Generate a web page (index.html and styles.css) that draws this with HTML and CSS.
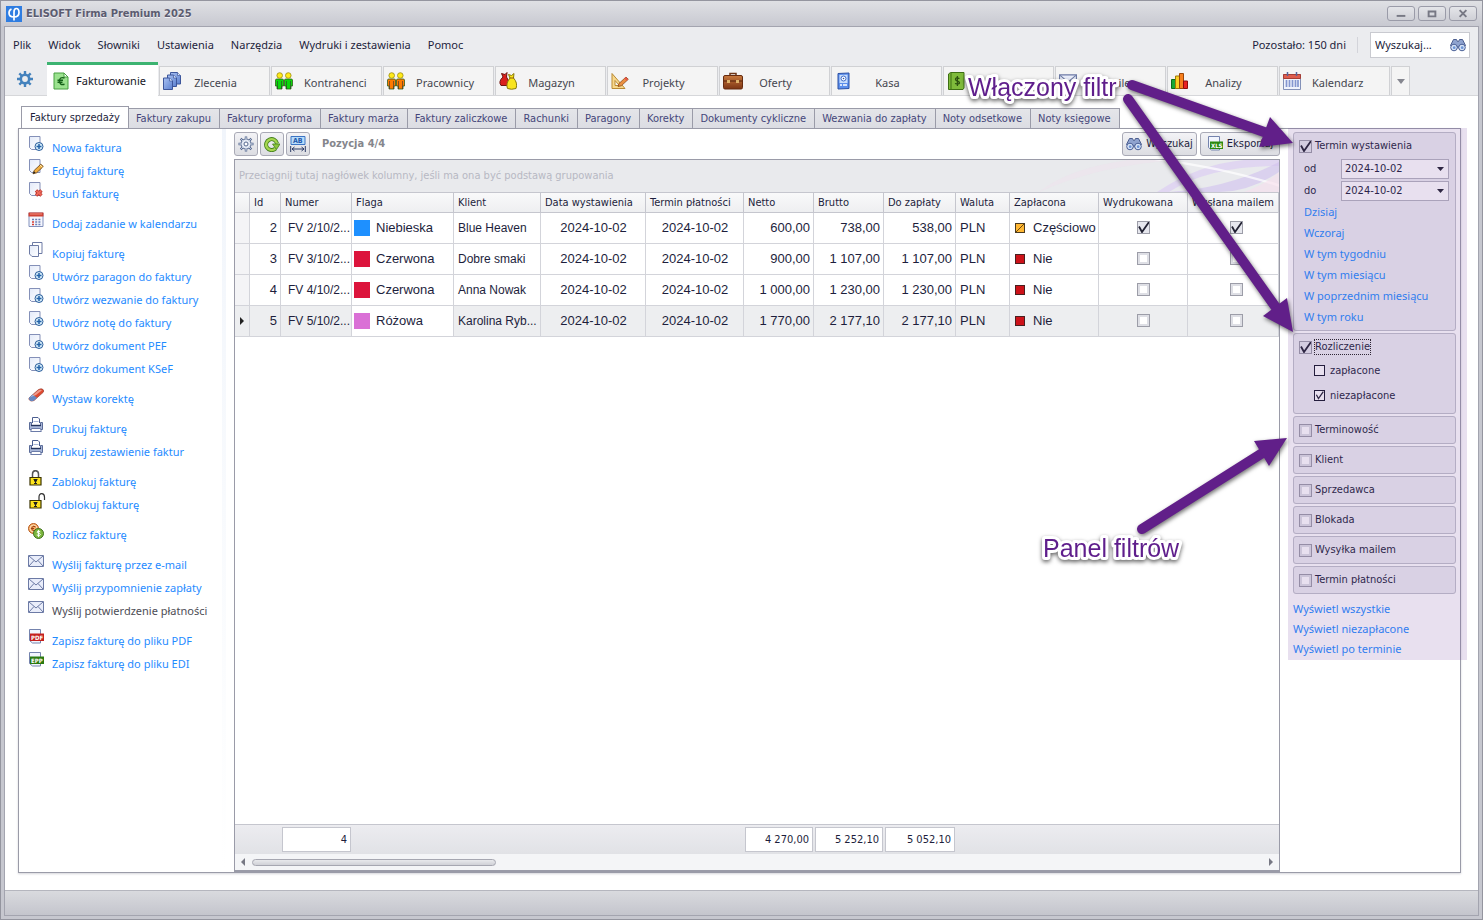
FILE: index.html
```html
<!DOCTYPE html>
<html lang="pl">
<head>
<meta charset="utf-8">
<title>ELISOFT Firma Premium 2025</title>
<link rel="stylesheet" href="styles.css">
</head>
<body>
<svg class="sprite" aria-hidden="true">
  <defs>
    <linearGradient id="gPage" x1="0" y1="0" x2="1" y2="1"><stop offset="0" stop-color="#e3eaf9"/><stop offset="1" stop-color="#fff"/></linearGradient>
    <linearGradient id="gBlue" x1="0" y1="0" x2="1" y2="1"><stop offset="0" stop-color="#a9c1f2"/><stop offset="1" stop-color="#5b80cf"/></linearGradient>
    <linearGradient id="gBrown" x1="0" y1="0" x2="0" y2="1"><stop offset="0" stop-color="#c97a3e"/><stop offset="1" stop-color="#7c3413"/></linearGradient>
    <symbol id="page" viewBox="0 0 16 16"><path d="M1.500.500h10.500v13h-8.500l-2-2z" fill="url(#gPage)" stroke="#8490b8"/></symbol>
    <symbol id="page-add" viewBox="0 0 16 16"><use href="#page"/><circle cx="11" cy="10.500" r="4" fill="#d6edfb" stroke="#2d5f9b"/><path d="M11 8v5M8.500 10.500h5" stroke="#2463a8" stroke-width="1.500"/></symbol>
    <symbol id="page-edit" viewBox="0 0 16 16"><use href="#page"/><path d="M5 14.800l1.200-3.400 6.600-6.200 2.500 2.300-6.700 6.300z" fill="#f2ae3f" stroke="#6f4a1b" stroke-width=".9"/><path d="M5 14.800l1-2.600 1.600 1.500z" fill="#222"/><path d="M12 6l2.500 2.400" stroke="#fff0b9"/></symbol>
    <symbol id="page-del" viewBox="0 0 16 16"><use href="#page"/><path d="M8 8.500l5.500 5M13.500 8.500l-5.500 5" stroke="#b42a22" stroke-width="3.400"/><path d="M8.300 8.800l5 4.400M13.200 8.800l-5 4.400" stroke="#ee6a5c" stroke-width="1.800"/></symbol>
    <symbol id="cal" viewBox="0 0 16 16"><path d="M1 1h14v13.500H1z" fill="#f4f6fd" stroke="#8291bd"/><path d="M.500.500h15v4H.500z" fill="#cf4335"/><path d="M2 2h12" stroke="#f08e80"/><path d="M4 7.500h2M7.200 7.500h2M10.400 7.500h2M7.200 10h2M10.400 10h2M7.200 12.500h2M10.400 12.500h2" stroke="#6c7fb5" stroke-width="1.400"/><path d="M4 10h2M4 12.500h2" stroke="#d63c31" stroke-width="1.600"/></symbol>
    <symbol id="copy" viewBox="0 0 16 16"><path d="M4.500.500h9.500v11H4.500z" fill="#fff" stroke="#6d7ba5"/><path d="M1.500 3.500h9v11H4l-2.500-2.500z" fill="url(#gPage)" stroke="#6d7ba5"/></symbol>
    <symbol id="eraser" viewBox="0 0 16 16"><path d="M1 11L10.500 2.500q3-1.500 4.500 0t0 3L6 13.500q-2.500 1.200-4 0t-1-2.500z" fill="#e0492f" stroke="#9a4436" stroke-width=".7"/><path d="M1 10.800L4.500 7.600l4.500 3.200-3 2.700q-2.500 1.200-4 0t-1-2.700z" fill="#6689c3"/><path d="M1.700 10.600L11 3q2-.8 3 .3l-6 4.700z" fill="#fff" opacity=".45"/></symbol>
    <symbol id="printer" viewBox="0 0 16 16"><path d="M4.500 6V.500h5.500l1.500 1.500v4" fill="#fff" stroke="#4c5f90"/><path d="M1.500 5.500h2v3h9v-3h2v7h-13z" fill="#a9b7d8" stroke="#5b6c99"/><path d="M3 8.500h10" stroke="#25345d" stroke-width="1.400"/><path d="M3.500 11.500h9l.800 3H2.700z" fill="#fff" stroke="#6b7ba8"/><path d="M5.500 4.500h5" stroke="#a9b7d8"/></symbol>
    <symbol id="lock" viewBox="0 0 16 16"><path d="M4.500 7V4q0-3.300 3-3.300t3 3.300v3" fill="none" stroke="#555" stroke-width="1.500"/><path d="M2 7.500h11v7.500H2z" fill="#ffe51d" stroke="#3a3200" stroke-width="1.200"/><path d="M5.500 9.500h4M7.500 9v4.500M6 13.500h3M6.500 9.500v2M8.500 9.500v2" stroke="#222"/></symbol>
    <symbol id="unlock" viewBox="0 0 18 16"><path d="M11 7V4q0-3.300 2.700-3.300T16.500 4v3" fill="none" stroke="#333" stroke-width="1.200"/><path d="M2 7.500h11v7.500H2z" fill="#ffe51d" stroke="#3a3200" stroke-width="1.200"/><path d="M5.500 9.500h4M7.500 9v4.500M6 13.500h3M6.500 9.500v2M8.500 9.500v2" stroke="#222"/></symbol>
    <symbol id="coins" viewBox="0 0 16 16"><circle cx="5.500" cy="5.500" r="5" fill="#f4a55d" stroke="#b55b1f"/><circle cx="5.500" cy="5.500" r="3.500" fill="none" stroke="#fde0b8"/><path d="M7.500 3.800q-3.500-1.500-3.500 1.700t3.500 1.800M3 5.500h3" fill="none" stroke="#984214"/><circle cx="10.500" cy="10.500" r="5" fill="#7cb63d" stroke="#3f6f1c"/><path d="M12.300 8.800q-3.300-1.300-3.300.2c0 1.700 3.400 1 3.400 2.600q0 1.500-3.700.4M10.600 7v7" fill="none" stroke="#fff"/></symbol>
    <symbol id="mail" viewBox="0 0 16 16"><path d="M.500 2.500h15v11H.500z" fill="#e9edfa" stroke="#6c7aa5"/><path d="M1 3l7 6 7-6M1 13l5-5.500M15 13l-5-5.500" fill="none" stroke="#6c7aa5"/></symbol>
    <symbol id="doc-tag" viewBox="0 0 16 16"><path d="M1.500.500h11v13.500h-8l-3-2.500z" fill="#f2f5fd" stroke="#7483ad"/></symbol>
    <symbol id="binoc" viewBox="0 0 16 14"><path d="M3.500 1.500h3l1 2h1l1-2h3l3 6-3 3H9L8 8 7 10.500H3.500l-3-3z" fill="#8fa3cf" stroke="#4b5d8e"/><circle cx="4" cy="9.500" r="3.300" fill="#d7e4f8" stroke="#4a5f96"/><circle cx="12" cy="9.500" r="3.300" fill="#d7e4f8" stroke="#4a5f96"/><circle cx="4.200" cy="9.700" r="1.400" fill="#6f96d6"/><circle cx="12.200" cy="9.700" r="1.400" fill="#6f96d6"/></symbol>
    <symbol id="people" viewBox="0 0 18 18"><path d="M.500 8q0-1 1.500-1h5q1.500 0 1.500 1v6H7v3H2v-3H.500zM9.500 8q0-1 1.500-1h5q1.500 0 1.500 1v6H16v3h-5v-3H9.500z" fill="currentColor" stroke="#2a5a12" stroke-opacity=".75"/><path d="M2.500 9v8M6.500 9v8M11.500 9v8M15.500 9v8" stroke="#333" stroke-width=".6"/><circle cx="4.700" cy="3.500" r="2.800" fill="#ffea1a" stroke="#9b8b10" stroke-width=".8"/><circle cx="13.300" cy="3.500" r="2.800" fill="#ffea1a" stroke="#9b8b10" stroke-width=".8"/></symbol>
  </defs>
</svg>

<div class="window">
  <header class="titlebar">
    <svg class="logo" viewBox="0 0 16 16"><path fill="#2f7de1" d="M0 0h16v16H0z"/><path d="M5.500 3q-2.500 1-2.500 4 0 4 5 4t5-4.500Q13 2.500 10.300 2.500 8 2.500 8 6v8.500" fill="none" stroke="#fff" stroke-width="1.700"/></svg>
    <h1 class="title">ELISOFT Firma Premium 2025</h1>
    <div class="winbtns">
      <button class="winbtn" aria-label="Minimalizuj"><svg viewBox="0 0 27 13"><path d="M9 9h9" stroke="#777884" stroke-width="2"/></svg></button>
      <button class="winbtn" aria-label="Maksymalizuj"><svg viewBox="0 0 27 13"><path d="M10 4.500h7v5h-7z" fill="none" stroke="#777884" stroke-width="2"/></svg></button>
      <button class="winbtn" aria-label="Zamknij"><svg viewBox="0 0 27 13"><path d="M10 3l7 7M17 3l-7 7" stroke="#777884" stroke-width="2"/></svg></button>
    </div>
  </header>

  <div class="client">
    <div class="menubar">
      <nav class="menu">
        <a href="#">Plik</a><a href="#">Widok</a><a href="#">Słowniki</a><a href="#">Ustawienia</a><a href="#">Narzędzia</a><a href="#">Wydruki i zestawienia</a><a href="#">Pomoc</a>
      </nav>
      <span class="remaining">Pozostało: 150 dni</span>
      <label class="search"><input type="text" value="Wyszukaj..." aria-label="Wyszukaj"><svg viewBox="0 0 16 14"><use href="#binoc"/></svg></label>
    </div>

    <nav class="ribbon">
      <button class="gear" aria-label="Konfiguracja"><svg viewBox="0 0 16 16"><circle cx="8" cy="8" r="4.200" fill="none" stroke="#4482bd" stroke-width="2.600"/><path d="M8 0v3M8 13v3M0 8h3M13 8h3M2.300 2.300l2.200 2.200M11.500 11.500l2.200 2.200M13.700 2.300l-2.200 2.200M4.500 11.500l-2.200 2.200" stroke="#4482bd" stroke-width="2.400"/></svg></button>
      <button class="mod active"><svg viewBox="0 0 18 18"><path d="M2 1h10l4 4v12H2z" fill="#9be28f" stroke="#46a040"/><path d="M12 1l4 4h-4z" fill="#fff" stroke="#46a040"/><path d="M12.500 6q-5-1.500-5 3t5 3.300M5.500 8.200h5.500M5.500 10.200h5" fill="none" stroke="#146018" stroke-width="1.400"/></svg><span>Fakturowanie</span></button>
      <button class="mod"><svg viewBox="0 0 18 18"><g fill="url(#gBlue)" stroke="#3d569b"><path d="M7.500.500h7l3 3V12h-10z"/><path d="M4.500 3h6l3 3v8.500h-9z"/><path d="M.500 6h6l3 3v8.500h-9z"/></g><path d="M6.500 6v3h3M10.500 3v3h3M14.500.500v3h3" fill="#dde7fb" stroke="#3d569b" stroke-width=".7"/></svg><span>Zlecenia</span></button>
      <button class="mod green"><svg viewBox="0 0 18 18"><use href="#people"/></svg><span>Kontrahenci</span></button>
      <button class="mod orange"><svg viewBox="0 0 18 18"><use href="#people"/></svg><span>Pracownicy</span></button>
      <button class="mod"><svg viewBox="0 0 18 18"><path d="M4 5L2.500 1.500 6 2.500 8 .500 7.500 5q3.500 4 1.500 8.500H2Q-1 9.500 4 5z" fill="#d9201c" stroke="#6f1511"/><path d="M11 6L9.500 2.500l3 1 2.500-2-.500 4.500q4.500 5 2.500 10.500-4.500 1.500-8.500 0Q6.500 11.500 11 6z" fill="#f8e41d" stroke="#8a7b0a"/><path d="M10.500 6h4.500" stroke="#8a5b0a"/></svg><span>Magazyn</span></button>
      <button class="mod"><svg viewBox="0 0 18 18"><path d="M1 1.500L14 16.500H1z" fill="#f8d88b" stroke="#b98a34"/><path d="M4 8.500l4.500 5H4z" fill="#f4f4f2" stroke="#b98a34"/><path d="M7 14.500L8 11.500l7-6.500 2.300 2.300-7 6.500z" fill="#eb9040" stroke="#8b4b1a" stroke-width=".8"/><path d="M14 5.800l2.300 2.300" stroke="#e8544a" stroke-width="2"/></svg><span>Projekty</span></button>
      <button class="mod wide"><svg viewBox="0 0 20 18"><path d="M7 4V1.500h6V4" fill="none" stroke="#6d3517" stroke-width="1.500"/><rect x=".500" y="3.500" width="19" height="13.500" rx="1.500" fill="url(#gBrown)" stroke="#662c10"/><path d="M1 9h18" stroke="#4f1f0a"/><path d="M4 8h3v3H4zM13 8h3v3h-3z" fill="#dfb36a"/></svg><span>Oferty</span></button>
      <button class="mod"><svg viewBox="0 0 18 18"><path d="M3 1.500L14 1v15.500L3 17z" fill="#5b8eec" stroke="#2d51a4"/><path d="M4.500 3l8-.3v8.300h-8z" fill="#c9defc"/><circle cx="8.500" cy="6.500" r="2.500" fill="#fff" stroke="#3d6bc9"/><circle cx="8.500" cy="6.500" r=".8" fill="#2d51a4"/><path d="M5 13h2M8 13h4" stroke="#fff" stroke-width="1.500"/></svg><span>Kasa</span></button>
      <button class="mod" aria-label="Księga"><svg viewBox="0 0 18 18"><path d="M1.500 2l2-1.500H17V16l-1 1.500H1.500z" fill="#7fbb3b" stroke="#3e6f14"/><path d="M4 1v16" stroke="#3e6f14"/><path d="M12.500 6.500q-4-1.500-4 .8c0 2.300 4 1.300 4 3.500q0 2-4.500.7M10.400 4v10" fill="none" stroke="#2d5210" stroke-width="1.300"/></svg></button>
      <button class="mod"><svg viewBox="0 0 18 18"><use href="#mail"/></svg><span>E-maile</span></button>
      <button class="mod"><svg viewBox="0 0 18 18"><path d="M.500 7.500h4v9h-4z" fill="#18a834" stroke="#0b6a1d"/><path d="M4.500 4h4v12.500h-4z" fill="#fbcf25" stroke="#a07b05"/><path d="M8.500 1.500h4v15h-4z" fill="#f7801e" stroke="#9b4608"/><path d="M12.500 9h4v7.500h-4z" fill="#ea2222" stroke="#8f0c0c"/></svg><span>Analizy</span></button>
      <button class="mod"><svg viewBox="0 0 18 18"><path d="M.500 2.500h17v15H.500z" fill="#f0f3fc" stroke="#8391b8"/><path d="M.500 2.500h17v4H.500z" fill="#de5c4d" stroke="#a63d33"/><path d="M4.500 0v4M13.500 0v4" stroke="#56649a" stroke-width="1.500"/><path d="M3.500 8v7M6.500 8v7M9.500 8v7M12.500 8v7M15 8v7" stroke="#8496cf" stroke-width="1.700"/></svg><span>Kalendarz</span></button>
      <button class="more" aria-label="Więcej"><svg viewBox="0 0 8 5"><path d="M0 0h8L4 5z" fill="#85868f"/></svg></button>
    </nav>

    <main class="work">
      <nav class="tabs">
        <button class="tab current">Faktury sprzedaży</button><button class="tab">Faktury zakupu</button><button class="tab">Faktury proforma</button><button class="tab">Faktury marża</button><button class="tab">Faktury zaliczkowe</button><button class="tab">Rachunki</button><button class="tab">Paragony</button><button class="tab">Korekty</button><button class="tab">Dokumenty cykliczne</button><button class="tab">Wezwania do zapłaty</button><button class="tab">Noty odsetkowe</button><button class="tab">Noty księgowe</button>
      </nav>

      <div class="panel">
        <aside class="actions">
          <ul>
            <li><a href="#"><svg><use href="#page-add"/></svg>Nowa faktura</a></li>
            <li><a href="#"><svg><use href="#page-edit"/></svg>Edytuj fakturę</a></li>
            <li><a href="#"><svg><use href="#page-del"/></svg>Usuń fakturę</a></li>
          </ul>
          <ul>
            <li><a href="#"><svg><use href="#cal"/></svg>Dodaj zadanie w kalendarzu</a></li>
          </ul>
          <ul>
            <li><a href="#"><svg><use href="#copy"/></svg>Kopiuj fakturę</a></li>
            <li><a href="#"><svg><use href="#page-add"/></svg>Utwórz paragon do faktury</a></li>
            <li><a href="#"><svg><use href="#page-add"/></svg>Utwórz wezwanie do faktury</a></li>
            <li><a href="#"><svg><use href="#page-add"/></svg>Utwórz notę do faktury</a></li>
            <li><a href="#"><svg><use href="#page-add"/></svg>Utwórz dokument PEF</a></li>
            <li><a href="#"><svg><use href="#page-add"/></svg>Utwórz dokument KSeF</a></li>
          </ul>
          <ul>
            <li><a href="#"><svg><use href="#eraser"/></svg>Wystaw korektę</a></li>
          </ul>
          <ul>
            <li><a href="#"><svg><use href="#printer"/></svg>Drukuj fakturę</a></li>
            <li><a href="#"><svg><use href="#printer"/></svg>Drukuj zestawienie faktur</a></li>
          </ul>
          <ul>
            <li><a href="#"><svg><use href="#lock"/></svg>Zablokuj fakturę</a></li>
            <li><a href="#"><svg class="open"><use href="#unlock"/></svg>Odblokuj fakturę</a></li>
          </ul>
          <ul>
            <li><a href="#"><svg><use href="#coins"/></svg>Rozlicz fakturę</a></li>
          </ul>
          <ul>
            <li><a href="#"><svg><use href="#mail"/></svg>Wyślij fakturę przez e-mail</a></li>
            <li><a href="#"><svg><use href="#mail"/></svg>Wyślij przypomnienie zapłaty</a></li>
            <li><a href="#" class="off"><svg><use href="#mail"/></svg>Wyślij potwierdzenie płatności</a></li>
          </ul>
          <ul>
            <li><a href="#"><svg viewBox="0 0 16 16"><use href="#doc-tag"/><path fill="#c4201d" d="M2 4.500h14v7.500H2z"/><text class="tag" x="3" y="11">PDF</text></svg>Zapisz fakturę do pliku PDF</a></li>
            <li><a href="#"><svg viewBox="0 0 16 16"><use href="#doc-tag"/><path fill="#2b7a10" d="M2 4.500h14v7.500H2z"/><text class="tag" x="3" y="11">EPP</text></svg>Zapisz fakturę do pliku EDI</a></li>
          </ul>
        </aside>

        <section class="center">
          <div class="toolbar">
            <button class="tool" aria-label="Ustawienia listy"><svg viewBox="0 0 16 16"><circle cx="8" cy="8" r="5" fill="#e4eaf4" stroke="#55688f"/><path d="M8 .500v2.500M8 13v2.500M.500 8H3M13 8h2.500M2.700 2.700l1.800 1.800M11.500 11.500l1.800 1.800M13.300 2.700l-1.800 1.800M4.500 11.500l-1.800 1.800" stroke="#55688f" stroke-width="2.400"/><path d="M8 1.200v2.500M8 12.300v2.500M1.200 8h2.500M12.300 8h2.500M3.300 3.300l1.500 1.500M11.200 11.200l1.500 1.500M12.700 3.300l-1.500 1.500M4.800 11.200l-1.500 1.500" stroke="#e4eaf4"/><circle cx="8" cy="8" r="2" fill="#fff" stroke="#55688f"/></svg></button>
            <button class="tool" aria-label="Odśwież"><svg viewBox="0 0 16 16"><path d="M11.500 12.500A5.500 5.500 0 1 1 13 7.500" fill="none" stroke="#43801b" stroke-width="4"/><path d="M11.500 12.500A5.500 5.500 0 1 1 13 7.500" fill="none" stroke="#a6d64f" stroke-width="2.400"/><path d="M8.500 8h7.500l-3.500 5.500z" fill="#8cc63c" stroke="#43801b" stroke-width=".8"/></svg></button>
            <button class="tool" aria-label="Dopasuj kolumny"><svg viewBox="0 0 16 16"><path d="M1 .500h14v8H1z" fill="#b7dcfa" stroke="#3c74c4"/><text class="ab" x="3" y="7">AB</text><path d="M.700 10v6M15.300 10v6M2 13h12M4.500 11L2 13l2.500 2M11.500 11l2.500 2-2.500 2" fill="none" stroke="#2b3a66"/></svg></button>
            <span class="position">Pozycja 4/4</span>
            <button class="wide-tool"><svg viewBox="0 0 16 14"><use href="#binoc"/></svg>Wyszukaj</button>
            <button class="wide-tool export"><svg viewBox="0 0 16 16"><use href="#doc-tag"/><path fill="#2b8a10" d="M3 5.500h13V13H3z"/><text class="tag" x="4" y="12">XLS</text></svg>Eksportuj</button>
          </div>

          <div class="grid">
            <div class="groupbar">
              <span>Przeciągnij tutaj nagłówek kolumny, jeśli ma ona być podstawą grupowania</span>
              <svg viewBox="0 0 240 32" aria-hidden="true"><path d="M0 32Q60 5 140 0H90Q30 8 0 32z" fill="#f0e2ee" opacity=".5"/><path d="M118 32Q160 4 205 0H240v6Q170 6 130 32z" fill="#dccdf2" opacity=".7"/><path d="M130 32Q190 28 240 2v10Q210 32 180 32z" fill="#d0c0ef" opacity=".6"/><path d="M130 0q50 6 110 24v3Q190 10 115 0z" fill="#fff" opacity=".7"/><path d="M205 32q22-8 35-20v20z" fill="#f7ddec" opacity=".6"/></svg>
            </div>
            <table>
              <colgroup><col class="c-ind"><col class="c-id"><col class="c-num"><col class="c-flag"><col class="c-cli"><col class="c-iss"><col class="c-due"><col class="c-net"><col class="c-net"><col class="c-pay"><col class="c-cur"><col class="c-prn"><col class="c-prn"><col></colgroup>
              <thead><tr><th></th><th>Id</th><th>Numer</th><th>Flaga</th><th>Klient</th><th>Data wystawienia</th><th>Termin płatności</th><th>Netto</th><th>Brutto</th><th>Do zapłaty</th><th>Waluta</th><th>Zapłacona</th><th>Wydrukowana</th><th>Wysłana mailem</th></tr></thead>
              <tbody>
                <tr><td class="ind"></td><td class="num">2</td><td class="inv">FV 2/10/2...</td><td class="flag"><i class="blue"></i>Niebieska</td><td class="cli">Blue Heaven</td><td class="mid">2024-10-02</td><td class="mid">2024-10-02</td><td class="num">600,00</td><td class="num">738,00</td><td class="num">538,00</td><td>PLN</td><td class="paid"><i class="part"></i>Częściowo</td><td class="mid"><input type="checkbox" checked aria-label="Wydrukowana 2"></td><td class="mid"><input type="checkbox" checked aria-label="Wysłana mailem 2"></td></tr>
                <tr><td class="ind"></td><td class="num">3</td><td class="inv">FV 3/10/2...</td><td class="flag"><i class="red"></i>Czerwona</td><td class="cli">Dobre smaki</td><td class="mid">2024-10-02</td><td class="mid">2024-10-02</td><td class="num">900,00</td><td class="num">1 107,00</td><td class="num">1 107,00</td><td>PLN</td><td class="paid"><i></i>Nie</td><td class="mid"><input type="checkbox" aria-label="Wydrukowana 3"></td><td class="mid"><input type="checkbox" aria-label="Wysłana mailem 3"></td></tr>
                <tr><td class="ind"></td><td class="num">4</td><td class="inv">FV 4/10/2...</td><td class="flag"><i class="red"></i>Czerwona</td><td class="cli">Anna Nowak</td><td class="mid">2024-10-02</td><td class="mid">2024-10-02</td><td class="num">1 000,00</td><td class="num">1 230,00</td><td class="num">1 230,00</td><td>PLN</td><td class="paid"><i></i>Nie</td><td class="mid"><input type="checkbox" aria-label="Wydrukowana 4"></td><td class="mid"><input type="checkbox" aria-label="Wysłana mailem 4"></td></tr>
                <tr class="sel"><td class="ind"><svg viewBox="0 0 4 8"><path d="M0 0l4 4-4 4z" fill="#222"/></svg></td><td class="num">5</td><td class="inv">FV 5/10/2...</td><td class="flag focus"><i class="pink"></i>Różowa</td><td class="cli">Karolina Ryb...</td><td class="mid">2024-10-02</td><td class="mid">2024-10-02</td><td class="num">1 770,00</td><td class="num">2 177,10</td><td class="num">2 177,10</td><td>PLN</td><td class="paid"><i></i>Nie</td><td class="mid"><input type="checkbox" aria-label="Wydrukowana 5"></td><td class="mid"><input type="checkbox" aria-label="Wysłana mailem 5"></td></tr>
              </tbody>
            </table>
            <div class="totals"><output>4</output><output class="t-net">4 270,00</output><output>5 252,10</output><output>5 052,10</output></div>
            <div class="scroll"><svg viewBox="0 0 4 8"><path d="M4 0L0 4l4 4z" fill="#777884"/></svg><div class="track"><div class="thumb"></div></div><svg viewBox="0 0 4 8"><path d="M0 0l4 4-4 4z" fill="#777884"/></svg></div>
          </div>
        </section>

        <aside class="side">
          <div class="filters">
            <fieldset class="box">
              <label class="head"><input type="checkbox" checked>Termin wystawienia</label>
              <div class="dates">
                <label for="from">od</label><select id="from"><option>2024-10-02</option></select>
                <label for="to">do</label><select id="to"><option>2024-10-02</option></select>
              </div>
              <div class="quick"><a href="#">Dzisiaj</a><a href="#">Wczoraj</a><a href="#">W tym tygodniu</a><a href="#">W tym miesiącu</a><a href="#">W poprzednim miesiącu</a><a href="#">W tym roku</a></div>
            </fieldset>
            <fieldset class="box status-box">
              <label class="head"><input type="checkbox" checked><span class="dotted">Rozliczenie</span></label>
              <label class="sub"><input type="checkbox" class="flat">zapłacone</label>
              <label class="sub"><input type="checkbox" class="flat" checked>niezapłacone</label>
            </fieldset>
            <fieldset class="box one"><label class="head"><input type="checkbox">Terminowość</label></fieldset>
            <fieldset class="box one"><label class="head"><input type="checkbox">Klient</label></fieldset>
            <fieldset class="box one"><label class="head"><input type="checkbox">Sprzedawca</label></fieldset>
            <fieldset class="box one"><label class="head"><input type="checkbox">Blokada</label></fieldset>
            <fieldset class="box one"><label class="head"><input type="checkbox">Wysyłka mailem</label></fieldset>
            <fieldset class="box one"><label class="head"><input type="checkbox">Termin płatności</label></fieldset>
            <div class="views"><a href="#">Wyświetl wszystkie</a><a href="#">Wyświetl niezapłacone</a><a href="#">Wyświetl po terminie</a></div>
          </div>
        </aside>
      </div>
    </main>
    <footer class="status"></footer>
  </div>

  <svg class="callouts" width="523" height="600" viewBox="960 0 523 600">
    <g class="arrows">
      <path class="shaft" d="M1132 85L1267 133M1128 99L1277 309M1142 529L1264 452"/>
      <path class="tip" d="M1293 143L1259 147L1270 117zM1293 332L1263 316L1287 298zM1287 438L1254 441L1269 466z"/>
    </g>
    <g class="notes"><text x="968" y="96">Włączony filtr</text><text x="1043" y="557">Panel filtrów</text></g>
  </svg>
</div>
</body>
</html>
```
FILE: styles.css
```css
:root {
  --tahoma: "DejaVu Sans Condensed", "DejaVu Sans", sans-serif;
  --segoe: "Noto Sans", "Open Sans", sans-serif;
  --arial: "Liberation Sans", Arial, sans-serif;
  --line: #9a9ba8;
  --rule: #d3d4da;
  --ink: #1d1e3c;
  --link: #1f8bff;
}

* { box-sizing: border-box; }

body {
  margin: 0;
  font: 11px/14px var(--tahoma);
  color: var(--ink);
}

button, input, select { font: inherit; color: inherit; margin: 0; padding: 0; }
button { border: 0; background: none; }
a { color: var(--link); text-decoration: none; }
ul { list-style: none; margin: 0; padding: 0; }
svg { display: block; flex: none; }

.sprite { position: absolute; width: 0; height: 0; }

.window {
  position: relative;
  min-height: 100vh;
  display: flex;
  flex-direction: column;
  padding: 0 3px 3px;
  border: 1px solid #94959f;
  background: #c6c7cf;
}

.titlebar {
  display: flex;
  align-items: center;
  gap: 4px;
  height: 25px;
  margin: 0 -3px;
  padding: 0 5px;
  background: linear-gradient(#dfe0e4, #c8c9d1);
}
.logo { width: 16px; height: 16px; }
.title { flex: 1; margin: 0; font-size: 11px; color: #5b5c70; text-shadow: 0 1px #f0f0f4; }
.winbtns { display: flex; gap: 3px; }
.winbtn {
  width: 28px;
  height: 15px;
  border: 1px solid var(--line);
  border-radius: 3px;
  background: linear-gradient(#e4e5e9, #cfd0d6);
}
.winbtn svg { width: 26px; height: 13px; }

.client {
  flex: 1;
  display: flex;
  flex-direction: column;
  border: 1px solid #a3a4af;
  background: #ebecef;
}

.menubar {
  display: flex;
  align-items: center;
  height: 35px;
  padding: 0 8px;
  font: 11px/16px var(--segoe);
}
.menu { display: flex; flex: 1; gap: 17px; }
.menu a { color: var(--ink); }
.remaining { padding-right: 11px; border-right: 1px solid #d3d4da; }
.search {
  display: flex;
  align-items: center;
  width: 100px;
  height: 26px;
  margin-left: 12px;
  padding: 0 3px 0 4px;
  border: 1px solid #c9cad0;
  background: #fff;
}
.search input { flex: 1; min-width: 0; border: 0; outline: 0; }
.search svg { width: 16px; height: 14px; }

.ribbon {
  display: flex;
  align-items: flex-end;
  gap: 1px;
  height: 34px;
  border-bottom: 1px solid #d6d7da;
  font: 11px/16px var(--segoe);
  color: #45464f;
}
.gear { align-self: stretch; width: 41px; padding-left: 12px; }
.gear svg { width: 16px; height: 16px; }
.mod {
  display: flex;
  align-items: center;
  flex: 0 1 111px;
  height: 29px;
  padding-left: 3px;
  border: 1px solid #d0d1d4;
  border-bottom: 0;
  background: #f4f4f4;
}
.mod svg { width: 18px; height: 18px; margin-right: 11px; }
.mod.wide svg { width: 20px; margin-right: 9px; }
.mod span { min-width: 47px; padding-top: 4px; text-align: center; white-space: nowrap; }
.mod.active {
  height: 34px;
  margin-bottom: -1px;
  padding-left: 5px;
  border: 0;
  border-top: 3px solid #3cb371;
  background: #fff;
  color: #16171f;
}
.mod.active svg { margin-right: 6px; }
.mod.active span { padding-top: 0; }
.green { color: #0bd70b; }
.orange { color: #ff7a00; }
.green span, .orange span { color: #45464f; }
.more { display: grid; place-items: center; width: 19px; height: 29px; border: 1px solid #d0d1d4; border-bottom: 0; background: #f4f4f4; }
.more svg { width: 8px; height: 5px; }

.work {
  flex: 1;
  display: flex;
  flex-direction: column;
  padding: 10px 17px 17px 13px;
  background: #fff;
}

.tabs { display: flex; align-items: flex-end; height: 22px; margin: 0 3px; }
.tab {
  height: 20px;
  padding: 1px 8px 0 7px;
  border: 1px solid var(--line);
  border-left-width: 0;
  border-bottom: 0;
  background: linear-gradient(#e4e5e9, #dcdde3);
  color: #45467a;
  white-space: nowrap;
}
.tab.current {
  height: 23px;
  margin-bottom: -1px;
  padding: 0 8px;
  border-left-width: 1px;
  background: #fff;
  color: var(--ink);
}

.panel {
  flex: 1;
  display: grid;
  grid-template-columns: 215px minmax(0, 1fr) 180px;
  border: 1px solid var(--line);
  box-shadow: 0 1px 2px #d5d5da;
}

.actions {
  margin-right: 8px;
  padding: 7px 4px 0 9px;
  background: linear-gradient(#f1f5fb, #fff) right / 4px 100% no-repeat;
  font: 11px/23px var(--segoe);
}
.actions ul { margin-bottom: 7px; }
.actions a { display: flex; gap: 8px; white-space: nowrap; }
.actions svg { width: 16px; height: 16px; }
.actions svg.open { width: 18px; margin-right: -2px; }
.actions .off { color: #4d4d55; }
.tag { font: bold 6px/6px var(--tahoma); fill: #fff; }
.ab { font: bold 7px/7px var(--tahoma); fill: #2458ac; }

.center { display: flex; flex-direction: column; min-width: 0; }

.toolbar { display: flex; align-items: center; gap: 2px; height: 30px; }
.tool, .wide-tool {
  display: flex;
  align-items: center;
  justify-content: center;
  width: 24px;
  height: 24px;
  border: 1px solid #a9aab6;
  border-radius: 3px;
  background: linear-gradient(#f3f3f6, #dcdde2);
}
.tool svg { width: 16px; height: 16px; }
.position { flex: 1; padding-left: 10px; font-weight: bold; color: #85868c; }
.wide-tool { width: 75px; gap: 4px; }
.wide-tool svg { width: 16px; height: 16px; }
.wide-tool.export { width: 80px; margin-left: 1px; }

.grid { flex: 1; display: flex; flex-direction: column; border: 1px solid var(--line); border-bottom-width: 2px; }
.groupbar {
  display: flex;
  align-items: center;
  justify-content: space-between;
  height: 32px;
  padding-left: 4px;
  background: #e9eaed;
  color: #b7b8c3;
}
.groupbar svg { width: 240px; height: 32px; }

table { width: 100%; table-layout: fixed; border-collapse: separate; border-spacing: 0; }
.c-ind { width: 15px; }
.c-id { width: 31px; }
.c-num { width: 71px; }
.c-flag { width: 102px; }
.c-cli { width: 87px; }
.c-iss { width: 105px; }
.c-due { width: 98px; }
.c-net { width: 70px; }
.c-pay { width: 72px; }
.c-cur { width: 54px; }
.c-prn { width: 89px; }

th, td { overflow: hidden; white-space: nowrap; border-right: 1px solid var(--rule); border-bottom: 1px solid var(--rule); }
th {
  height: 21px;
  padding: 0 0 0 4px;
  border-top: 1px solid #c5c6ce;
  border-color: #c5c6ce;
  background: linear-gradient(#f9f9fa, #eeeff1);
  font-weight: normal;
  text-align: left;
}
td { height: 31px; padding: 0 3px 0 4px; font: 13px/16px var(--arial); }
td.ind { padding: 0 0 0 5px; background: #f4f4f6; }
.ind svg { width: 4px; height: 8px; }
td.num { text-align: right; }
td.inv { padding: 0 0 0 7px; font-size: 12px; }
td.cli { padding-right: 0; font-size: 12px; }
td.mid { text-align: center; }
td.mid:last-child { padding-left: 10px; }
td.flag { padding-left: 2px; }
td.paid { padding-right: 0; }
.flag i { display: inline-block; width: 16px; height: 16px; margin-right: 6px; vertical-align: top; }
i.blue { background: #1e90ff; }
i.red { background: #dc143c; }
i.pink { background: #da70d6; }
.paid i { display: inline-block; width: 10px; height: 10px; margin: 0 8px 0 1px; border: 1px solid #4a2020; background: #cd1219; vertical-align: -1px; }
.paid i.part { border-color: #4a3a20; background: linear-gradient(135deg, #ffb733 45%, #6b4a10 46%, #6b4a10 54%, #ffb733 55%); }
.sel td { background: #edeef0; }
.sel td.focus { background: #fff; }

input[type="checkbox"] {
  appearance: none;
  flex: none;
  width: 13px;
  height: 13px;
  border: 1px solid #9c9da8;
  background: #fff;
  box-shadow: inset 0 0 0 2px #dedfe5;
  vertical-align: middle;
}
td input[type="checkbox"] { vertical-align: -2px; }
input[type="checkbox"]:checked {
  background: #e6e7ee url("data:image/svg+xml,%3Csvg xmlns='http://www.w3.org/2000/svg' viewBox='0 0 13 13'%3E%3Cpath d='M2 5.500L5 11 12 1' fill='none' stroke='%23222233' stroke-width='1.800'/%3E%3C/svg%3E") border-box center / 13px 13px no-repeat;
  box-shadow: none;
  outline: 0;
}
input[type="checkbox"].flat { width: 11px; height: 11px; border-color: #16172c; box-shadow: none; }
input[type="checkbox"].flat:checked { background-color: #fff; background-size: 9px 9px; }

.totals {
  display: grid;
  grid-template-columns: 69px 390px 68px 68px 70px;
  gap: 2px;
  height: 30px;
  margin-top: auto;
  padding: 2px 0 2px 47px;
  border-top: 1px solid #c5c6ce;
  background: linear-gradient(#ececf0, #e1e2e6);
}
.totals output { padding: 5px 3px 0 0; border: 1px solid #c5c6ce; background: #fff; text-align: right; }
.totals .t-net { grid-column: 3; }

.scroll { display: flex; align-items: center; gap: 7px; height: 16px; padding: 0 6px; background: #f4f5f7; }
.scroll svg { width: 4px; height: 8px; }
.track { flex: 1; }
.thumb { width: 24.2%; height: 7px; border: 1px solid #a6a7b1; border-radius: 4px; background: linear-gradient(#e8e9ec, #d0d1d7); }

.side { padding-left: 8px; }
.filters {
  position: relative;
  display: flex;
  flex-direction: column;
  gap: 2px;
  padding: 3px 4px 1px 5px;
}
.filters::after {
  content: "";
  position: absolute;
  inset: -1px -7px 0 0;
  background: rgb(111 61 155 / 16%);
  pointer-events: none;
}
.box { min-width: 0; margin: 0; padding: 2px 5px 3px; border: 1px solid #c2c3cc; border-radius: 3px; background: #eeeef2; }
.box.one { padding-bottom: 2px; }
.status-box { padding-bottom: 5px; }
.head { display: flex; align-items: center; gap: 3px; height: 22px; }
.dotted { outline: 1px dotted #222; }
.dates { display: grid; grid-template-columns: 37px 1fr; align-items: center; row-gap: 2px; margin: 2px 1px 0 5px; }
.dates select {
  height: 20px;
  padding-left: 3px;
  border: 1px solid #b5b6c0;
  border-radius: 0;
  appearance: none;
  background: #fff url("data:image/svg+xml,%3Csvg xmlns='http://www.w3.org/2000/svg' viewBox='0 0 7 4'%3E%3Cpath d='M0 0h7L3.500 4z' fill='%23222233'/%3E%3C/svg%3E") right 4px center / 7px 4px no-repeat;
}
.quick a, .views a { display: block; }
.quick { padding-left: 5px; font: 11px/21px var(--segoe); }
.sub { display: flex; align-items: center; gap: 5px; height: 25px; padding-left: 15px; }
.views { padding-top: 3px; font: 11px/20px var(--segoe); }

.status { height: 25px; border-top: 1px solid #b5b6be; background: linear-gradient(#d9dade, #c4c5cd); }

.callouts { position: absolute; top: -1px; right: -1px; pointer-events: none; }
.arrows { filter: drop-shadow(1px 2px 2px rgb(0 0 0 / 55%)); }
.shaft { fill: none; stroke: #611f89; stroke-width: 10; stroke-linecap: round; }
.tip { fill: #611f89; }
.notes { font: 25px/28px var(--arial); filter: drop-shadow(0 2px 2px rgb(0 0 0 / 60%)); }
.notes text { fill: #5f1e8c; stroke: #fff; stroke-width: 6; stroke-linejoin: round; paint-order: stroke; }
```
